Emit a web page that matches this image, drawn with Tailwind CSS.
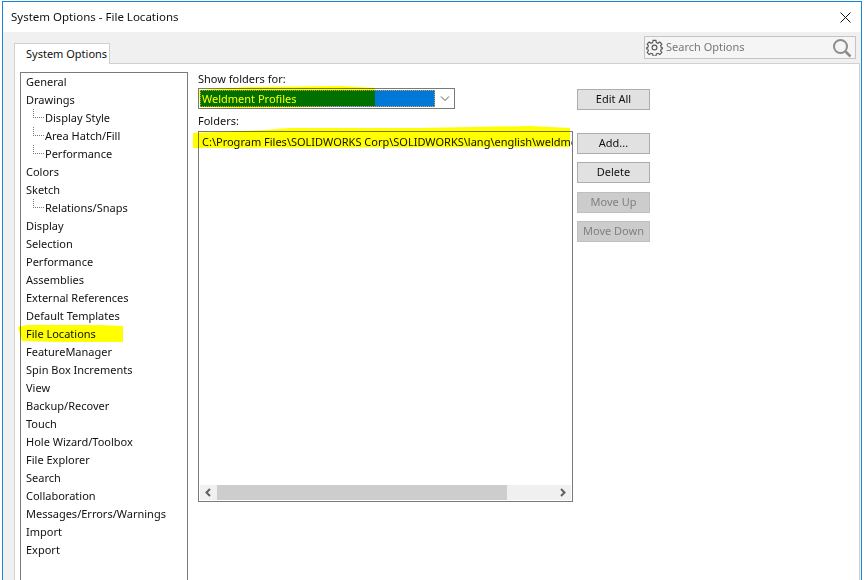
<!DOCTYPE html>
<html lang="en">
<head>
    <meta charset="UTF-8">
    <title>System Options - File Locations</title>
    <script src="https://cdn.jsdelivr.net/npm/@tailwindcss/browser@4"></script>
</head>
<body class="w-[866px] h-[580px] overflow-hidden bg-white relative font-['Noto_Sans','Open_Sans',sans-serif] text-[11px] text-[#111]">
    <div class="ml-[2px] mt-[1px] w-[860px] h-[579px] border-x border-t border-[#1a86d8] flex flex-col">
        <!-- Title bar -->
        <div class="h-[30px] shrink-0 flex items-center justify-between pl-[8px] pr-[10px] bg-white">
            <span class="text-[11.5px] leading-none">System Options - File Locations</span>
            <svg class="w-[11px] h-[11px]" viewBox="0 0 11 11"><path d="M0.5 0.5L10.5 10.5M10.5 0.5L0.5 10.5" stroke="#111" stroke-width="1" fill="none"/></svg>
        </div>

        <div class="flex-1 flex flex-col bg-[#f0f0f0] pl-[11px] min-h-0">
            <!-- Tabs and search -->
            <div class="h-[31px] shrink-0 flex items-end justify-between relative">
                <div class="w-[96px] h-[21px] -mb-[1px] z-10 bg-white border border-b-0 border-[#d0d0d0] flex items-center pl-[11px] whitespace-nowrap">System Options</div>
                <div class="w-[212px] h-[23px] mb-[4px] mr-[5px] bg-[#f5f5f5] border border-[#c4c4c4] flex items-center text-[#777] relative">
                    <svg class="w-[17px] h-[17px] ml-[1px] mr-[3px]" viewBox="0 0 24 24" fill="none" stroke="#555" stroke-width="1.6"><circle cx="12" cy="12" r="3.4"/><path d="M10 2h4l.6 3 2.3 1 2.6-1.700 2.800 2.800-1.700 2.600 1 2.300 3 .6v1l-3 .6-1 2.300 1.700 2.600-2.800 2.800-2.600-1.700-2.300 1-.6 3h-4l-.6-3-2.300-1-2.600 1.700-2.800-2.800 1.700-2.600-1-2.300-3-.6v-1l3-.6 1-2.300-1.700-2.600 2.800-2.800 2.600 1.700 2.300-1z"/></svg>
                    <span class="flex-1">Search Options</span>
                    <svg class="w-[20px] h-[20px] mr-[3px]" viewBox="0 0 20 20" fill="none"><circle cx="8.500" cy="8.500" r="6.500" stroke="#8c8c8c" stroke-width="2"/><path d="M13.500 13.500L18.500 18.500" stroke="#8c8c8c" stroke-width="2.500"/></svg>
                </div>
            </div>

            <!-- Tab page -->
            <div class="flex-1 min-h-0 bg-white border-l border-t border-r border-[#d0d0d0] mr-[1px] pl-[5px] pt-[8px] flex overflow-hidden">
                <!-- Category tree -->
                <ul class="w-[168px] h-[520px] shrink-0 border border-[#7a7a7a] pl-[5px] leading-[18px]">
                    <li>General</li>
                    <li>Drawings</li>
                    <li class="relative pl-[19px]"><span class="absolute left-[7px] top-0 h-[9px] w-[11px] border-l border-b border-dotted border-[#777]"></span>Display Style</li>
                    <li class="relative pl-[19px]"><span class="absolute left-[7px] top-0 h-[9px] w-[11px] border-l border-b border-dotted border-[#777]"></span>Area Hatch/Fill</li>
                    <li class="relative pl-[19px]"><span class="absolute left-[7px] top-0 h-[9px] w-[11px] border-l border-b border-dotted border-[#777]"></span>Performance</li>
                    <li>Colors</li>
                    <li>Sketch</li>
                    <li class="relative pl-[19px]"><span class="absolute left-[7px] top-0 h-[9px] w-[11px] border-l border-b border-dotted border-[#777]"></span>Relations/Snaps</li>
                    <li>Display</li>
                    <li>Selection</li>
                    <li>Performance</li>
                    <li>Assemblies</li>
                    <li>External References</li>
                    <li>Default Templates</li>
                    <li>File Locations</li>
                    <li>FeatureManager</li>
                    <li>Spin Box Increments</li>
                    <li>View</li>
                    <li>Backup/Recover</li>
                    <li>Touch</li>
                    <li>Hole Wizard/Toolbox</li>
                    <li>File Explorer</li>
                    <li>Search</li>
                    <li>Collaboration</li>
                    <li>Messages/Errors/Warnings</li>
                    <li>Import</li>
                    <li>Export</li>
                </ul>

                <!-- Folder settings -->
                <div class="w-[375px] shrink-0 ml-[10px] flex flex-col">
                    <div class="h-[16px] leading-[14px]">Show folders for:</div>
                    <div class="w-[257px] h-[21px] border border-[#7a7a7a] flex items-center p-[1px]">
                        <div class="w-[235px] h-full bg-[#0078d7] border border-dotted border-[#e0a050]">
                            <div class="w-[174px] h-full bg-[#007000] text-[#ffff00] leading-[15px] pl-[1px]">Weldment Profiles</div>
                        </div>
                        <svg class="w-[10px] h-[6px] ml-[5px]" viewBox="0 0 10 6" fill="none"><path d="M1 .5L5 4.500L9 .5" stroke="#555"/></svg>
                    </div>
                    <div class="h-[22px] pt-[5px] leading-[14px]">Folders:</div>
                    <div class="w-[375px] h-[371px] border border-[#7a7a7a] flex flex-col">
                        <div class="flex-1 min-h-0 pl-[3px] pt-[1px] leading-[18px] overflow-hidden whitespace-nowrap">C:\Program Files\SOLIDWORKS Corp\SOLIDWORKS\lang\english\weldme</div>
                        <div class="h-[15px] m-[1px] bg-[#f0f0f0] flex items-center justify-between">
                            <svg class="w-[17px] h-[9px]" viewBox="0 0 17 9" fill="none"><path d="M10 1L6.500 4.500L10 8" stroke="#606060" stroke-width="2"/></svg>
                            <div class="w-[290px] h-full bg-[#cdcdcd] mr-[47px]"></div>
                            <svg class="w-[17px] h-[9px]" viewBox="0 0 17 9" fill="none"><path d="M7 1L10.500 4.500L7 8" stroke="#606060" stroke-width="2"/></svg>
                        </div>
                    </div>
                </div>

                <!-- Buttons -->
                <div class="w-[73px] ml-[4px] pt-[17px] flex flex-col shrink-0">
                    <button class="h-[21px] bg-[#e1e1e1] border border-[#adadad]">Edit All</button>
                    <button class="h-[21px] mt-[23px] bg-[#e1e1e1] border border-[#adadad]">Add...</button>
                    <button class="h-[21px] mt-[8px] bg-[#e1e1e1] border border-[#adadad]">Delete</button>
                    <button class="h-[21px] mt-[9px] bg-[#cccccc] border border-[#bfbfbf] text-[#808080]">Move Up</button>
                    <button class="h-[21px] mt-[8px] bg-[#cccccc] border border-[#bfbfbf] text-[#808080]">Move Down</button>
                </div>
            </div>
        </div>
    </div>

    <!-- Yellow marker strokes drawn over the dialog -->
    <svg class="absolute left-0 top-0 w-[866px] h-[580px] pointer-events-none mix-blend-multiply" viewBox="0 0 866 580">
        <path d="M18 327L27 325L98 325L123 326V342L60 342L22 341Z" fill="#ffff00"/>
        <path d="M193 133L265 130L290 128L420 128L530 126L570 128V147L193 148Z" fill="#ffff00"/>
        <path d="M199 90L250 87L340 86L375 88V91L201 91V105L290 106L335 107L240 108L200 107Z" fill="#ffff00"/>
    </svg>
</body>
</html>
